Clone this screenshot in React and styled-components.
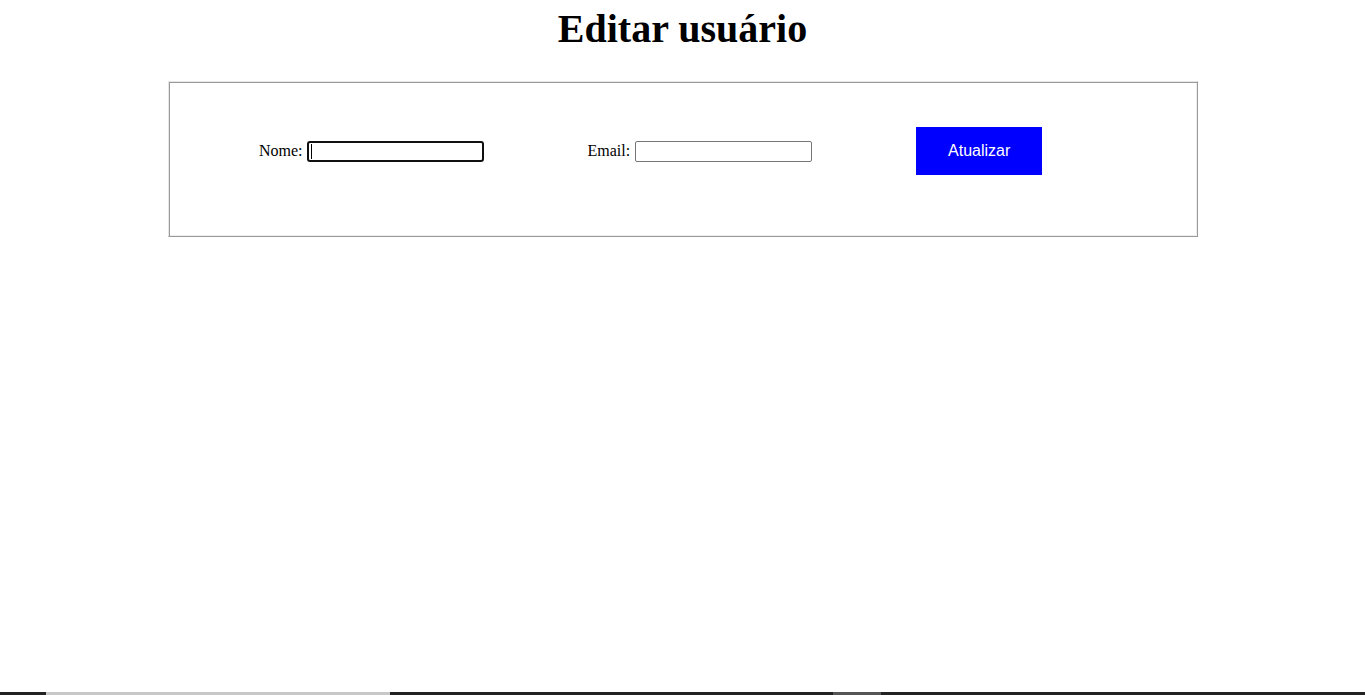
import React from 'react';
import styled, { createGlobalStyle } from 'styled-components';

const GlobalStyle = createGlobalStyle`
  html, body {
    margin: 0;
    padding: 0;
    background: #ffffff;
  }
  body {
    font-family: "Liberation Serif", "Times New Roman", serif;
    color: #000;
  }
`;

const Page = styled.div`
  display: flex;
  flex-direction: column;
  min-height: 100vh;
`;

const Title = styled.h1`
  font-family: "Liberation Serif", "Times New Roman", serif;
  font-size: 40px;
  font-weight: 700;
  line-height: 46px;
  margin: 6px 0 29px;
  text-align: center;
`;

const FormBox = styled.form`
  align-items: center;
  border: 1px solid;
  border-color: #e6e6e6 #9a9a9a #9a9a9a #e6e6e6;
  box-shadow: inset 1px 1px 0 #9a9a9a, inset -1px -1px 0 #eeeeee;
  box-sizing: border-box;
  display: flex;
  gap: 104px;
  margin: 0 0 0 168px;
  padding: 45px 0 61px 90px;
  width: 1030px;
`;

const Field = styled.label`
  align-items: center;
  display: flex;
  font-size: 16px;
  gap: ${props => props.$gap || 4}px;
`;

const InputWrap = styled.span`
  display: inline-flex;
  position: relative;
`;

const Input = styled.input`
  background: #fff;
  border: 1px solid #767676;
  border-radius: 2px;
  box-sizing: border-box;
  font-family: Arial, "Liberation Sans", sans-serif;
  font-size: 13px;
  height: 21px;
  padding: 1px 2px;
  width: 177px;
  ${props => props.$focused && `
    border: 2px solid #101010;
    border-radius: 3px;
  `}
`;

const Caret = styled.span`
  background: #000;
  height: 15px;
  left: 4px;
  position: absolute;
  top: 3px;
  width: 1px;
`;

const Button = styled.button`
  background: #0000ff;
  border: none;
  color: #fff;
  cursor: pointer;
  font-family: Arial, "Liberation Sans", sans-serif;
  font-size: 16px;
  height: 48px;
  margin-left: 0;
  padding: 0;
  width: 126px;
`;

const BottomStrip = styled.div`
  display: flex;
  height: 3px;
  margin-top: auto;
`;

const StripPart = styled.div`
  background: ${props => props.color};
  width: ${props => props.w}px;
  flex: ${props => (props.w ? '0 0 auto' : '1 1 auto')};
`;

const App = () => (
  <Page>
    <GlobalStyle />
    <Title>Editar usuário</Title>
    <FormBox onSubmit={e => e.preventDefault()}>
      <Field>
        Nome:
        <InputWrap>
          <Input type="text" $focused />
          <Caret />
        </InputWrap>
      </Field>
      <Field $gap={5}>
        Email:
        <InputWrap>
          <Input type="email" />
        </InputWrap>
      </Field>
      <Button type="submit">Atualizar</Button>
    </FormBox>
    <BottomStrip>
      <StripPart color="#222" w={46} />
      <StripPart color="#c8c8c8" w={344} />
      <StripPart color="#222" w={443} />
      <StripPart color="#555" w={48} />
      <StripPart color="#222" />
    </BottomStrip>
  </Page>
);

export default App;
